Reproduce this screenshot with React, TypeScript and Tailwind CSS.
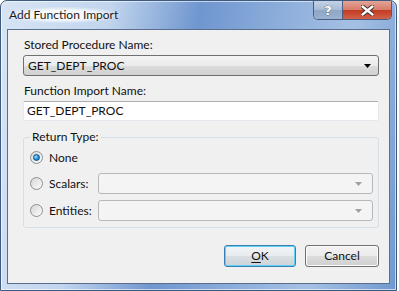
import React from "react";

function Radio({ checked }: { checked?: boolean }) {
  return (
    <span className="relative flex h-[13px] w-[13px] shrink-0 items-center justify-center rounded-full border border-[#8e8f8f] bg-gradient-to-br from-[#d6d6d6] to-[#fdfdfd]">
      {checked && (
        <span className="h-[7px] w-[7px] rounded-full border border-[#0a4f84] bg-[radial-gradient(circle_at_35%_35%,#9ee0ff,#1a8ad6_60%,#0b5c9a)]" />
      )}
    </span>
  );
}

function Arrow({ color }: { color: string }) {
  return (
    <svg width="7" height="4" viewBox="0 0 7 4">
      <path d="M0 0h7L3.5 4z" fill={color} />
    </svg>
  );
}

function DisabledCombo() {
  return (
    <div className="flex h-[21px] w-[275px] items-center justify-end rounded-[3px] border border-[#b8b8b8] bg-[#f4f4f4] pr-[10px]">
      <Arrow color="#a0a0a0" />
    </div>
  );
}

export default function App() {
  return (
    <div className="h-[291px] w-[399px] bg-white font-['Lato',sans-serif] text-[12px] text-[#111]">
      <div className="flex h-[291px] w-[397px] flex-col rounded-t-[7px] border border-[#3e5a7e] bg-[linear-gradient(100deg,#d7e4f4_0%,#c1d5ee_25%,#6f96cf_45%,#8fb0dc_65%,#a5c0e3_80%,#7099d0_100%)] shadow-[inset_0_0_0_1px_rgba(255,255,255,0.6)]">
        {/* title bar */}
        <div className="flex h-[28px] shrink-0 items-start">
          <div className="mt-[6px] ml-[6px] rounded-full bg-[radial-gradient(ellipse,rgba(255,255,255,0.85)_40%,rgba(255,255,255,0)_75%)] px-[2px] text-[12px] leading-[16px] text-[#1b1b1b]">
            Add Function Import
          </div>
          <div className="ml-auto mr-[4px] flex h-[19px] overflow-hidden rounded-b-[5px] border border-t-0 border-[#4a5f7d]">
            <div className="flex w-[29px] items-center justify-center border-r border-[#4a5f7d] bg-[linear-gradient(#c3d2e6_0%,#a9bcd6_48%,#8fa6c5_52%,#9bb3d3_100%)]">
              <span className="font-['DejaVu_Sans',sans-serif] text-[13px] font-bold leading-none text-white [-webkit-text-stroke:0.6px_#3a4a60] [paint-order:stroke_fill]">
                ?
              </span>
            </div>
            <div className="flex w-[48px] items-center justify-center bg-[linear-gradient(#e4a597_0%,#d77c68_48%,#c13b25_52%,#d3624a_100%)]">
              <svg width="13" height="11" viewBox="0 0 13 11">
                <path
                  d="M1.5 1.5l10 8M11.5 1.5l-10 8"
                  stroke="#3a2a28"
                  strokeWidth="4.2"
                  strokeLinecap="round"
                />
                <path
                  d="M1.5 1.5l10 8M11.5 1.5l-10 8"
                  stroke="#fff"
                  strokeWidth="2.4"
                  strokeLinecap="round"
                />
              </svg>
            </div>
          </div>
        </div>

        {/* client area */}
        <div className="mx-[6px] mb-[6px] flex flex-1 flex-col border border-[#5a6f8e] bg-[#f0f0f0] pl-[15px] pr-[10px] pt-[7px]">
          <div className="pl-[1px] leading-[16px]">Stored Procedure Name:</div>
          <div className="mt-[2px] flex h-[21px] w-[356px] items-center justify-between rounded-[3px] border border-[#707070] bg-[linear-gradient(#f3f3f3_0%,#ebebeb_50%,#dddddd_51%,#d0d0d0_100%)] pl-[4px] pr-[7px]">
            <span>GET_DEPT_PROC</span>
            <Arrow color="#000" />
          </div>

          <div className="mt-[7px] pl-[1px] leading-[16px]">Function Import Name:</div>
          <div className="mt-[2px] flex h-[20px] w-[356px] items-center rounded-[2px] border border-[#e3e9ef] border-t-[#abadb3] bg-white pl-[3px]">
            GET_DEPT_PROC
          </div>

          {/* group box */}
          <div className="relative mt-[16px] h-[91px] w-[356px] rounded-[3px] border border-[#d5dfe5]">
            <div className="absolute -top-[9px] left-[6px] bg-[#f0f0f0] px-[2px] leading-[16px]">
              Return Type:
            </div>
            <div className="flex flex-col pl-[6px] pt-[9px]">
              <div className="flex h-[21px] items-center gap-[6px]">
                <Radio checked />
                <span>None</span>
              </div>
              <div className="mt-[5px] flex h-[21px] items-center">
                <Radio />
                <span className="ml-[6px] w-[49px]">Scalars:</span>
                <DisabledCombo />
              </div>
              <div className="mt-[6px] flex h-[21px] items-center">
                <Radio />
                <span className="ml-[6px] w-[49px]">Entities:</span>
                <DisabledCombo />
              </div>
            </div>
          </div>

          {/* buttons */}
          <div className="mt-[17px] flex w-[356px] justify-end gap-[9px]">
            <button className="flex h-[22px] w-[72px] items-center justify-center rounded-[3px] border border-[#3c7fb1] bg-[linear-gradient(#f2f4f6_0%,#e8ecef_50%,#d9dfe3_51%,#ccd4d9_100%)] shadow-[inset_0_0_0_1px_#5fd0f7]">
              <span>
                <span className="underline underline-offset-2">O</span>K
              </span>
            </button>
            <button className="flex h-[22px] w-[74px] items-center justify-center rounded-[3px] border border-[#707070] bg-[linear-gradient(#f2f2f2_0%,#ebebeb_50%,#dddddd_51%,#cfcfcf_100%)] shadow-[inset_0_0_0_1px_#fcfcfc]">
              Cancel
            </button>
          </div>
        </div>
      </div>
    </div>
  );
}
